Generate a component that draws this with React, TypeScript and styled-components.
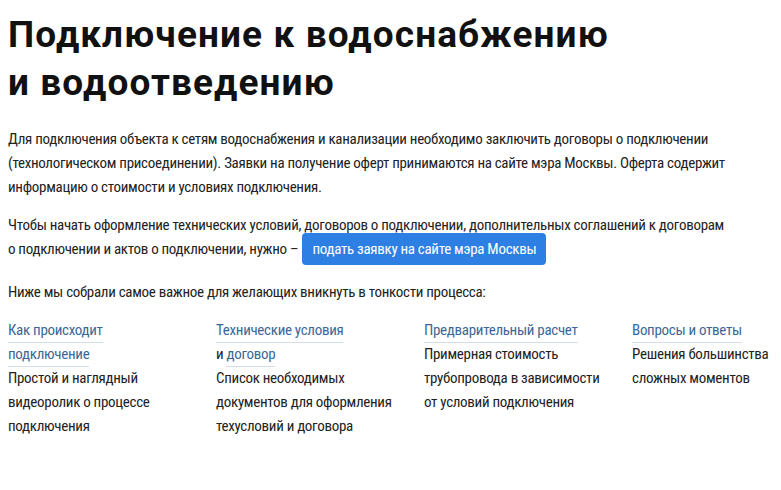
import React from "react";
import styled, { createGlobalStyle } from "styled-components";

const Global = createGlobalStyle`
  html, body { margin: 0; padding: 0; background: #fff; }
  body {
    font-family: Roboto, "Liberation Sans", sans-serif;
    font-stretch: 75%;
    color: #222;
  }
`;

const Page = styled.main`
  padding: 11px 8px 0 8px;
  width: 781px;
  box-sizing: border-box;
`;

const Title = styled.h1`
  margin: 0 0 20px 0;
  font-family: Roboto, "Liberation Sans", sans-serif;
  font-stretch: 100%;
  font-weight: 700;
  font-size: 37px;
  line-height: 48px;
  letter-spacing: 1.1px;
  color: #111;
`;

const Para = styled.p<{ $after?: number }>`
  margin: 0 0 ${(p) => p.$after ?? 13.5}px 0;
  font-size: 15px;
  line-height: 24px;
  letter-spacing: -0.3px;
  color: #222;
`;

const ApplyButton = styled.a`
  background: #2d7fe3;
  color: #fff;
  text-decoration: none;
  border-radius: 4px;
  padding: 7px 10px;
  margin-left: 1px;
  letter-spacing: -0.3px;
`;

const Columns = styled.div`
  display: grid;
  grid-template-columns: repeat(3, 208px) 1fr;
  margin-top: 14px;
`;

const Col = styled.div`
  font-size: 15px;
  line-height: 24px;
  letter-spacing: -0.3px;
  color: #222;
`;

const Link = styled.a`
  color: #3b6897;
  text-decoration: none;
  border-bottom: 1px solid #d5dee8;
  padding-bottom: 3px;
`;

type Item = { title: React.ReactNode[]; desc: string[] };

const items: Item[] = [
  {
    title: [<Link href="#">Как происходит</Link>, <Link href="#">подключение</Link>],
    desc: ["Простой и наглядный", "видеоролик о процессе", "подключения"],
  },
  {
    title: [
      <Link href="#">Технические условия</Link>,
      <>
        и <Link href="#">договор</Link>
      </>,
    ],
    desc: ["Список необходимых", "документов для оформления", "техусловий и договора"],
  },
  {
    title: [<Link href="#">Предварительный расчет</Link>],
    desc: ["Примерная стоимость", "трубопровода в зависимости", "от условий подключения"],
  },
  {
    title: [<Link href="#">Вопросы и ответы</Link>],
    desc: ["Решения большинства", "сложных моментов"],
  },
];

export default function App() {
  return (
    <>
      <Global />
      <Page>
        <Title>
          Подключение к водоснабжению
          <br />и водоотведению
        </Title>
        <Para>
          Для подключения объекта к сетям водоснабжения и канализации необходимо заключить договоры о подключении
          <br />
          (технологическом присоединении). Заявки на получение оферт принимаются на сайте мэра Москвы. Оферта содержит
          <br />
          информацию о стоимости и условиях подключения.
        </Para>
        <Para $after={19.5}>
          Чтобы начать оформление технических условий, договоров о подключении, дополнительных соглашений к договорам
          <br />о подключении и актов о подключении, нужно –{" "}
          <ApplyButton href="#">подать заявку на сайте мэра Москвы</ApplyButton>
        </Para>
        <Para>Ниже мы собрали самое важное для желающих вникнуть в тонкости процесса:</Para>
        <Columns>
          {items.map((it, i) => (
            <Col key={i}>
              {it.title.map((t, j) => (
                <div key={j}>{t}</div>
              ))}
              {it.desc.map((d) => (
                <div key={d}>{d}</div>
              ))}
            </Col>
          ))}
        </Columns>
      </Page>
    </>
  );
}
